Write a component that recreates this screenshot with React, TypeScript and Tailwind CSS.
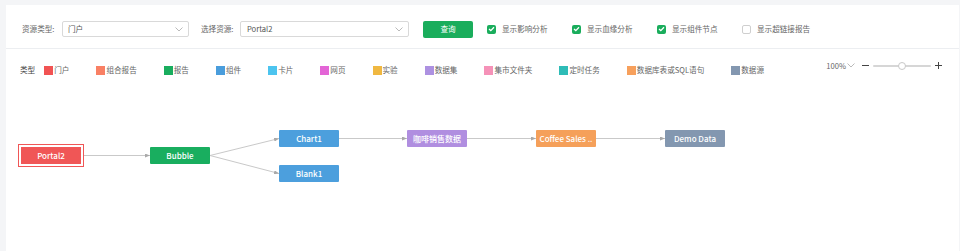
import React from "react";

const Chevron = ({ className = "" }: { className?: string }) => (
  <svg width="8" height="5" viewBox="0 0 8 5" className={className}>
    <path d="M0.5 0.5 L4 4 L7.5 0.5" fill="none" stroke="#a8a8a8" strokeWidth="0.8" />
  </svg>
);

const Check = ({ checked, label }: { checked: boolean; label: string }) => (
  <div className="flex items-center w-[85px] shrink-0">
    {checked ? (
      <div className="w-[9px] h-[9px] rounded-[2px] bg-[#1aad5c] flex items-center justify-center">
        <svg width="7" height="6" viewBox="0 0 7 6">
          <path d="M1 3 L2.8 4.6 L6 1.2" fill="none" stroke="#fff" strokeWidth="1.3" />
        </svg>
      </div>
    ) : (
      <div className="w-[9px] h-[9px] rounded-[2px] border border-[#cfcfcf] bg-white" />
    )}
    <span className="ml-[6px] text-[7.6px] leading-[10px] text-[#666]">{label}</span>
  </div>
);

const legend: [string, string][] = [
  ["门户", "#f15353"],
  ["组合报告", "#f98064"],
  ["报告", "#19ad5e"],
  ["组件", "#4a9ddc"],
  ["卡片", "#4cc4ef"],
  ["网页", "#e365d6"],
  ["实验", "#f0b841"],
  ["数据集", "#ad91e1"],
  ["集市文件夹", "#f592b8"],
  ["定时任务", "#2ebcb7"],
  ["数据库表或SQL语句", "#f7a05c"],
  ["数据源", "#8397b0"],
];

const Node = ({ label, color, left, top }: { label: string; color: string; left: number; top: number }) => (
  <div
    className="absolute w-[60px] h-[17px] rounded-[1px] flex items-center justify-center text-white text-[8px] font-medium whitespace-nowrap"
    style={{ left, top, backgroundColor: color }}
  >
    {label}
  </div>
);

export default function App() {
  return (
    <div className="w-[960px] h-[251px] bg-[#f4f5f7] pt-[5px] pl-[6px] pr-[1px] flex flex-col overflow-hidden font-['Noto_Sans_CJK_SC',sans-serif]">
      <div className="flex-1 bg-white flex flex-col">
        {/* filter bar */}
        <div className="h-[44px] shrink-0 border-b border-[#eceef1] flex items-center pl-[16px] pt-[5px]">
          <span className="text-[7.6px] leading-[10px] text-[#666] w-[33px] whitespace-nowrap">资源类型:</span>
          <div className="ml-[7px] w-[127px] h-[16px] border border-[#d9d9d9] rounded-[2px] flex items-center justify-between pl-[5px] pr-[5px]">
            <span className="text-[7.6px] leading-[10px] text-[#555]">门户</span>
            <Chevron />
          </div>
          <span className="ml-[12px] text-[7.6px] leading-[10px] text-[#666] w-[33px] whitespace-nowrap">选择资源:</span>
          <div className="ml-[6px] w-[169px] h-[16px] border border-[#d9d9d9] rounded-[2px] flex items-center justify-between pl-[6px] pr-[5px]">
            <span className="text-[7.6px] leading-[10px] text-[#555]">Portal2</span>
            <Chevron />
          </div>
          <div className="ml-[14px] w-[50px] h-[17px] rounded-[2px] bg-[#1aad5c] flex items-center justify-center text-white text-[7.6px]">
            查询
          </div>
          <div className="ml-[14px] flex items-center">
            <Check checked label="显示影响分析" />
            <Check checked label="显示血缘分析" />
            <Check checked label="显示组件节点" />
            <Check checked={false} label="显示超链接报告" />
          </div>
        </div>

        {/* graph area */}
        <div className="relative flex-1">
          <div className="flex justify-between items-start pl-[14px] pr-[17px] pt-[11px]">
            <div className="mt-[5px] h-[10px] flex items-center">
              <span className="text-[7.6px] leading-[10px] text-[#444] mr-[9px]">类型</span>
              <div className="flex items-center gap-[27px]">
                {legend.map(([name, c]) => (
                  <div key={name} className="flex items-center">
                    <div className="w-[9px] h-[9px]" style={{ backgroundColor: c }} />
                    <span className="ml-[1px] text-[7.6px] leading-[10px] text-[#666] whitespace-nowrap">{name}</span>
                  </div>
                ))}
              </div>
            </div>
            <div className="h-[11px] flex items-center">
              <span className="text-[7.6px] leading-[10px] text-[#666]">100%</span>
              <Chevron className="ml-[1px]" />
              <div className="ml-[7px] w-[7px] h-[1px] bg-[#444]" />
              <div className="ml-[4px] relative w-[58px] h-[2px] bg-[#d6d6d6] rounded-full">
                <div className="absolute left-[25px] top-[-3px] w-[8px] h-[8px] rounded-full bg-white border border-[#c8c8c8]" />
              </div>
              <div className="ml-[4px] relative w-[7px] h-[7px]">
                <div className="absolute left-0 top-[3px] w-[7px] h-[1px] bg-[#444]" />
                <div className="absolute left-[3px] top-0 w-[1px] h-[7px] bg-[#444]" />
              </div>
            </div>
          </div>

          <svg className="absolute left-0 top-0" width="953" height="201">
            <defs>
              <marker id="arr" markerWidth="5" markerHeight="4" refX="5" refY="2" orient="auto" markerUnits="userSpaceOnUse">
                <path d="M0 0 L5 2 L0 4 Z" fill="#a9a9a9" />
              </marker>
            </defs>
            <g stroke="#c9c9c9" strokeWidth="1" fill="none">
              <line x1="77" y1="106.5" x2="144" y2="106.5" markerEnd="url(#arr)" />
              <line x1="204" y1="106.5" x2="273" y2="89.5" markerEnd="url(#arr)" />
              <line x1="204" y1="106.5" x2="273" y2="124.5" markerEnd="url(#arr)" />
              <line x1="333" y1="89.5" x2="401" y2="89.5" markerEnd="url(#arr)" />
              <line x1="461" y1="89.5" x2="530" y2="89.5" markerEnd="url(#arr)" />
              <line x1="590" y1="89.5" x2="659" y2="89.5" markerEnd="url(#arr)" />
            </g>
          </svg>

          <div className="absolute left-[12px] top-[95px] w-[66px] h-[23px] border border-[#f05656] p-[2px]">
            <div className="w-full h-full bg-[#f05656] flex items-center justify-center text-white text-[8px] font-medium">
              Portal2
            </div>
          </div>
          <Node label="Bubble" color="#19ae5f" left={144} top={98} />
          <Node label="Chart1" color="#4c9fdd" left={273} top={81} />
          <Node label="Blank1" color="#4c9fdd" left={273} top={116} />
          <Node label="咖啡销售数据" color="#b08ee0" left={401} top={81} />
          <Node label="Coffee Sales .." color="#f5a05a" left={530} top={81} />
          <Node label="Demo Data" color="#8397b0" left={659} top={81} />
        </div>
      </div>
    </div>
  );
}
